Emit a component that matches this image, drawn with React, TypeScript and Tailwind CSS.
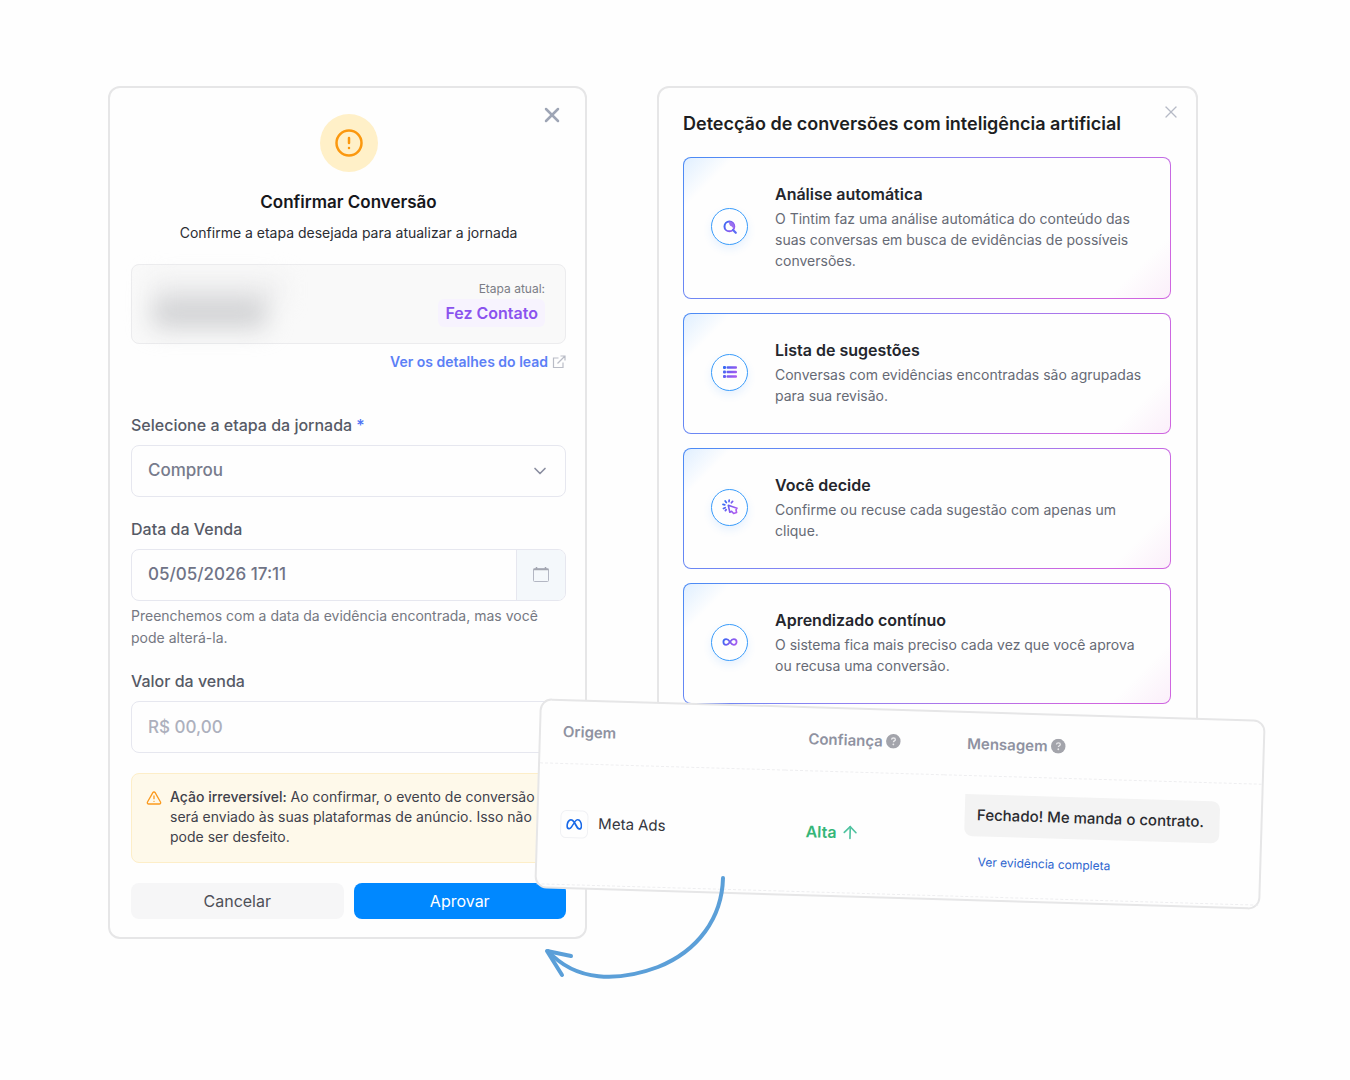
import React from 'react';
import { ArrowUp, ChevronDown, CircleAlert, TriangleAlert, X } from 'lucide-react';
import { FaMeta } from 'react-icons/fa6';

const SearchIcon = () => (
  <svg className="w-4 h-4" viewBox="0 0 16 16" fill="none">
    <circle cx="7.4" cy="7.4" r="4.9" stroke="url(#icon-gradient)" strokeWidth="2" />
    <path d="M7 2.500a5 5 0 0 1 5.200 5.200c-.8 1.400-2.200 1-2.600-.4C8.200 7 6.800 5.800 7 2.500z" fill="#9a70f0" />
    <path d="M11 11l2.800 2.800" stroke="#5b6cf5" strokeWidth="2.200" strokeLinecap="round" />
  </svg>
);

const ListIcon = () => (
  <svg className="w-4 h-4" viewBox="0 0 16 16">
    <g fill="url(#icon-gradient)">
      <rect x="1" y="2" width="3" height="3" rx="1" />
      <rect x="1" y="6.500" width="3" height="3" rx="1" />
      <rect x="1" y="11" width="3" height="3" rx="1" />
      <rect x="4.500" y="2.300" width="10.500" height="2.400" rx="1" />
      <rect x="4.500" y="6.800" width="10.500" height="2.400" rx="1" />
      <rect x="4.500" y="11.300" width="10.500" height="2.400" rx="1" />
    </g>
  </svg>
);

const ClickIcon = () => (
  <svg className="w-4 h-4" viewBox="0 0 16 16" fill="none" stroke="url(#icon-gradient)" strokeLinecap="round" strokeLinejoin="round">
    <path d="M6.300 6.300l1.500 7 1.800-1 2 2.200 3-1-.6-2.600 1-1.700z" strokeWidth="1.600" />
    <path d="M3.200 8.700L1.500 9.600M2.800 5.800L1 5.400M4.300 3.600L3.200 2M7 2.700l.2-1.700M9.400 3.800l1.200-1.400M4.200 10.600l-.8 1" strokeWidth="1.700" />
  </svg>
);

const InfinityIcon = () => (
  <svg className="w-4 h-4" viewBox="0 0 16 16" fill="none" stroke="url(#icon-gradient)" strokeWidth="1.800">
    <path d="M8 8C6.500 5.800 5.500 5.200 4.200 5.200C.5 5.200.5 10.800 4.200 10.800C5.500 10.800 6.500 10.200 8 8s2.500-2.800 3.800-2.800c3.700 0 3.700 5.600 0 5.600C10.500 10.800 9.500 10.200 8 8z" />
  </svg>
);

const ExternalIcon = () => (
  <svg className="w-[14px] h-[14px] text-[#b9bcc6]" viewBox="0 0 14 14" fill="none" stroke="currentColor" strokeWidth="1.200">
    <path d="M6.500 3H1.500v9.500H11V7.500M8.500 1h4.500v4.500M13 1L5.500 8.500" />
  </svg>
);

const CalendarIcon = () => (
  <svg className="w-[18px] h-[18px]" viewBox="0 0 18 18" fill="none" stroke="#b3b7c3">
    <rect x="1.500" y="2.500" width="15" height="13" rx="1" />
    <path d="M1.500 3.500h15M4.500 1v2M13.500 1v2" stroke="#a3a6b0" strokeWidth="1.500" />
  </svg>
);

const HelpIcon = () => (
  <svg className="w-[15px] h-[15px]" viewBox="0 0 15 15" fill="none">
    <circle cx="7.500" cy="7.500" r="7.300" fill="#a3a4ab" />
    <path d="M5.600 5.900c.1-1.100.9-1.700 2-1.700s1.900.7 1.900 1.600c0 1.300-1.900 1.300-1.900 2.600" stroke="#e8e8ea" strokeWidth="1.300" />
    <circle cx="7.600" cy="10.600" r=".9" fill="#e8e8ea" />
  </svg>
);

const features = [
  {
    title: 'Análise automática',
    text: 'O Tintim faz uma análise automática do conteúdo das suas conversas em busca de evidências de possíveis conversões.',
    Icon: SearchIcon
  },
  {
    title: 'Lista de sugestões',
    text: 'Conversas com evidências encontradas são agrupadas para sua revisão.',
    Icon: ListIcon
  },
  {
    title: 'Você decide',
    text: 'Confirme ou recuse cada sugestão com apenas um clique.',
    Icon: ClickIcon
  },
  {
    title: 'Aprendizado contínuo',
    text: 'O sistema fica mais preciso cada vez que você aprova ou recusa uma conversão.',
    Icon: InfinityIcon
  }
];

interface FormFieldProps {
  id: string;
  label: string;
  required?: boolean;
  children: React.ReactNode;
}

const FormField: React.FC<FormFieldProps> = ({ id, label, required, children }) => {
  return (
    <div>
      <label htmlFor={id} className="block mb-2 text-base leading-6 font-medium text-[#565a66]">
        {label}
        {required && <span className="ml-1 text-[#4f74f5]">*</span>}
      </label>
      {children}
    </div>
  );
};

const ConfirmDialog = () => {
  return (
    <section className="relative pl-[21px] pr-[19px] pt-[26px] pb-[18px] rounded-xl border-2 border-[#e6e6e7] bg-[#fefefe]">
      <button type="button" aria-label="Fechar" className="absolute top-[15px] right-[21px] text-[#9ea5b5]">
        <X className="w-6 h-6" strokeWidth={2.5} />
      </button>

      <div className="flex flex-col items-center">
        <div className="w-[58px] h-[58px] rounded-full bg-[#fff0c8] flex items-center justify-center">
          <CircleAlert className="w-[30px] h-[30px] text-[#fb980f]" strokeWidth={2} />
        </div>
        <h2 className="mt-[18px] text-[17px] leading-6 font-semibold text-[#16171c]">Confirmar Conversão</h2>
        <p className="mt-[7px] text-sm leading-6 text-[#2b2d33]">Confirme a etapa desejada para atualizar a jornada</p>
      </div>

      {/* Lead */}
      <div className="mt-[19px] h-20 px-5 flex items-center justify-between rounded-lg border border-[#ececee] bg-[#f9f9f9]">
        <div className="flex flex-col blur-md" aria-hidden="true">
          <div className="w-[130px] h-5 bg-[#ececed]" />
          <div className="w-[115px] h-7 rounded-lg bg-[#d0d1d3]" />
        </div>
        <div className="flex flex-col items-end">
          <span className="text-xs leading-4 text-[#7b7d86]">Etapa atual:</span>
          <span className="mt-0.5 px-[7px] rounded-md bg-[#f7f3fe] text-base leading-7 font-semibold text-[#8a52ee]">Fez Contato</span>
        </div>
      </div>
      <a href="#lead" className="mt-1.5 flex items-center justify-end gap-1 text-sm leading-6 font-semibold text-[#5c80f6]">
        Ver os detalhes do lead
        <ExternalIcon />
      </a>

      <form className="mt-[39px] flex flex-col gap-5">
        <FormField id="etapa" label="Selecione a etapa da jornada" required>
          <div className="relative">
            <select
              id="etapa"
              className="block w-full h-[52px] px-4 appearance-none rounded-lg border border-[#e6e7ef] bg-transparent text-[17px] font-medium text-[#777b8c]"
            >
              <option>Comprou</option>
            </select>
            <ChevronDown className="absolute right-4 top-4 w-5 h-5 text-[#8a8ea0] pointer-events-none" />
          </div>
        </FormField>

        <div>
          <FormField id="data" label="Data da Venda">
            <div className="flex h-[52px] rounded-lg border border-[#e6e7ef] overflow-hidden">
              <input
                id="data"
                type="text"
                defaultValue="05/05/2026 17:11"
                className="flex-1 min-w-0 px-4 text-[17px] font-medium text-[#6f7386]"
              />
              <button type="button" aria-label="Abrir calendário" className="w-[49px] flex items-center justify-center border-l border-[#e6e7ef] bg-[#f4f8fb]">
                <CalendarIcon />
              </button>
            </div>
          </FormField>
          <p className="mt-1 text-sm leading-[22px] text-[#757882]">
            Preenchemos com a data da evidência encontrada, mas você pode alterá-la.
          </p>
        </div>

        <FormField id="valor" label="Valor da venda">
          <input
            id="valor"
            type="text"
            placeholder="R$ 00,00"
            className="block w-full h-[52px] px-4 rounded-lg border border-[#e6e7ef] text-[17px] font-medium placeholder:text-[#adb0bd]"
          />
        </FormField>

        <div className="h-[90px] px-3.5 pt-[13px] flex gap-2 rounded-lg border border-[#fdeec8] bg-[#fef9ea]">
          <TriangleAlert className="mt-[3px] w-4 h-4 shrink-0 text-[#fb9a1e]" />
          <p className="text-sm leading-5 text-[#3f414a]">
            <strong className="font-medium">Ação irreversível:</strong> Ao confirmar, o evento de conversão será enviado às suas plataformas de anúncio. Isso não pode ser desfeito.
          </p>
        </div>

        <div className="grid grid-cols-2 gap-2.5">
          <button type="button" className="h-9 rounded-lg bg-[#f6f6f7] text-base text-[#4e5058]">Cancelar</button>
          <button type="button" className="h-9 rounded-lg bg-[#0088ff] text-base text-white">Aprovar</button>
        </div>
      </form>
    </section>
  );
};

const FeaturesDialog = () => {
  return (
    <section className="relative self-start pl-6 pr-[25px] pt-6 pb-7 rounded-xl border-2 border-[#e6e6e7] bg-[#fefefe]">
      <button type="button" aria-label="Fechar" className="absolute top-3.5 right-[15px] text-[#b6bac6]">
        <X className="w-5 h-5" strokeWidth={1.5} />
      </button>
      <h2 className="text-lg leading-6 font-semibold text-[#1d1e22]">Detecção de conversões com inteligência artificial</h2>

      <div className="mt-[21px] flex flex-col gap-3.5">
        {features.map(({ title, text, Icon }) => (
          <article
            key={title}
            className="pl-[27px] pr-5 pt-6 pb-[27px] flex items-center gap-[27px] rounded-lg border border-transparent [background:linear-gradient(135deg,#e0efff_0%,#fefefe_8%,#fefefe_90%,#fbeffa_100%)_padding-box,linear-gradient(135deg,#4a8bf5_0%,#8f83f3_45%,#cf66e0_85%)_border-box]"
          >
            <div className="w-[37px] h-[37px] shrink-0 rounded-full border border-[#3a9cfb] bg-[#fefefe] shadow-[0_4px_8px_rgba(60,150,255,0.12)] flex items-center justify-center">
              <Icon />
            </div>
            <div>
              <h3 className="text-base leading-6 font-semibold text-[#24262d]">{title}</h3>
              <p className="mt-0.5 text-sm leading-[21px] text-[#666a75]">{text}</p>
            </div>
          </article>
        ))}
      </div>
    </section>
  );
};

const EvidenceCard = () => {
  return (
    <div className="absolute top-[623px] left-[429px] -right-[65px] rotate-[1.7deg] rounded-xl border-2 border-[#e6e6e7] bg-[#fefefe] pb-0.5">
      <table className="w-full table-fixed text-left">
        <thead>
          <tr className="h-[62px] border-b border-dashed border-[#eeeef0] text-[15px] text-[#8f92a1]">
            <th className="w-[34%] pl-[22px] font-semibold">Origem</th>
            <th className="w-[22%] pl-[22px] font-semibold">
              <span className="flex items-center gap-[3px]">Confiança <HelpIcon /></span>
            </th>
            <th className="pl-[22px] font-semibold">
              <span className="flex items-center gap-[3px]">Mensagem <HelpIcon /></span>
            </th>
          </tr>
        </thead>
        <tbody>
          <tr className="h-[121px] border-b border-dashed border-[#eeeef0]">
            <td className="pl-[22px]">
              <div className="flex items-center gap-2.5 text-[15px] text-[#33353c]">
                <span className="w-7 h-7 flex items-center justify-center rounded-md border border-[#f0f1f4]">
                  <FaMeta className="w-4 h-4 text-[#1768e8]" />
                </span>
                Meta Ads
              </div>
            </td>
            <td className="pl-[22px]">
              <div className="flex items-center gap-1 text-base font-semibold text-[#35b678]">
                Alta
                <ArrowUp className="w-5 h-5 text-[#50c3a0]" strokeWidth={2} />
              </div>
            </td>
            <td className="pl-[22px] pb-1.5">
              <div className="w-fit pl-3 pr-4 rounded-lg rounded-tl-none bg-[#f3f3f3] text-[15px] leading-[42px] font-medium whitespace-nowrap text-[#2a2b30]">
                Fechado! Me manda o contrato.
              </div>
              <a href="#evidencia" className="block mt-4 ml-3.5 text-xs leading-5 text-[#2f66cf]">Ver evidência completa</a>
            </td>
          </tr>
        </tbody>
      </table>
    </div>
  );
};

const App = () => {
  return (
    <main className="min-h-screen pt-[86px] pb-16 pl-[8%] pr-[152px] bg-[#fefefe] font-['Inter',sans-serif]">
      <svg className="absolute w-0 h-0" aria-hidden="true">
        <defs>
          <linearGradient id="icon-gradient" gradientUnits="userSpaceOnUse" x1="1" y1="4" x2="15" y2="12">
            <stop offset="0" stopColor="#2f6bf5" />
            <stop offset="0.500" stopColor="#7b5cf0" />
            <stop offset="1" stopColor="#b05cf0" />
          </linearGradient>
        </defs>
      </svg>

      <div className="relative grid grid-cols-[479fr_541fr] gap-[70px]">
        <ConfirmDialog />
        <FeaturesDialog />
        <EvidenceCard />
        <svg className="absolute left-[432px] top-[784px] w-[192px] h-[116px]" viewBox="0 0 192 116" fill="none" stroke="#5b9fd8" strokeWidth="4" strokeLinecap="round" strokeLinejoin="round">
          <path d="M183 8C182 48 158 81 118 97C78 112 36 112 8 81" />
          <path d="M31 86L7 81L22 105" />
        </svg>
      </div>
    </main>
  );
};

export default App;
